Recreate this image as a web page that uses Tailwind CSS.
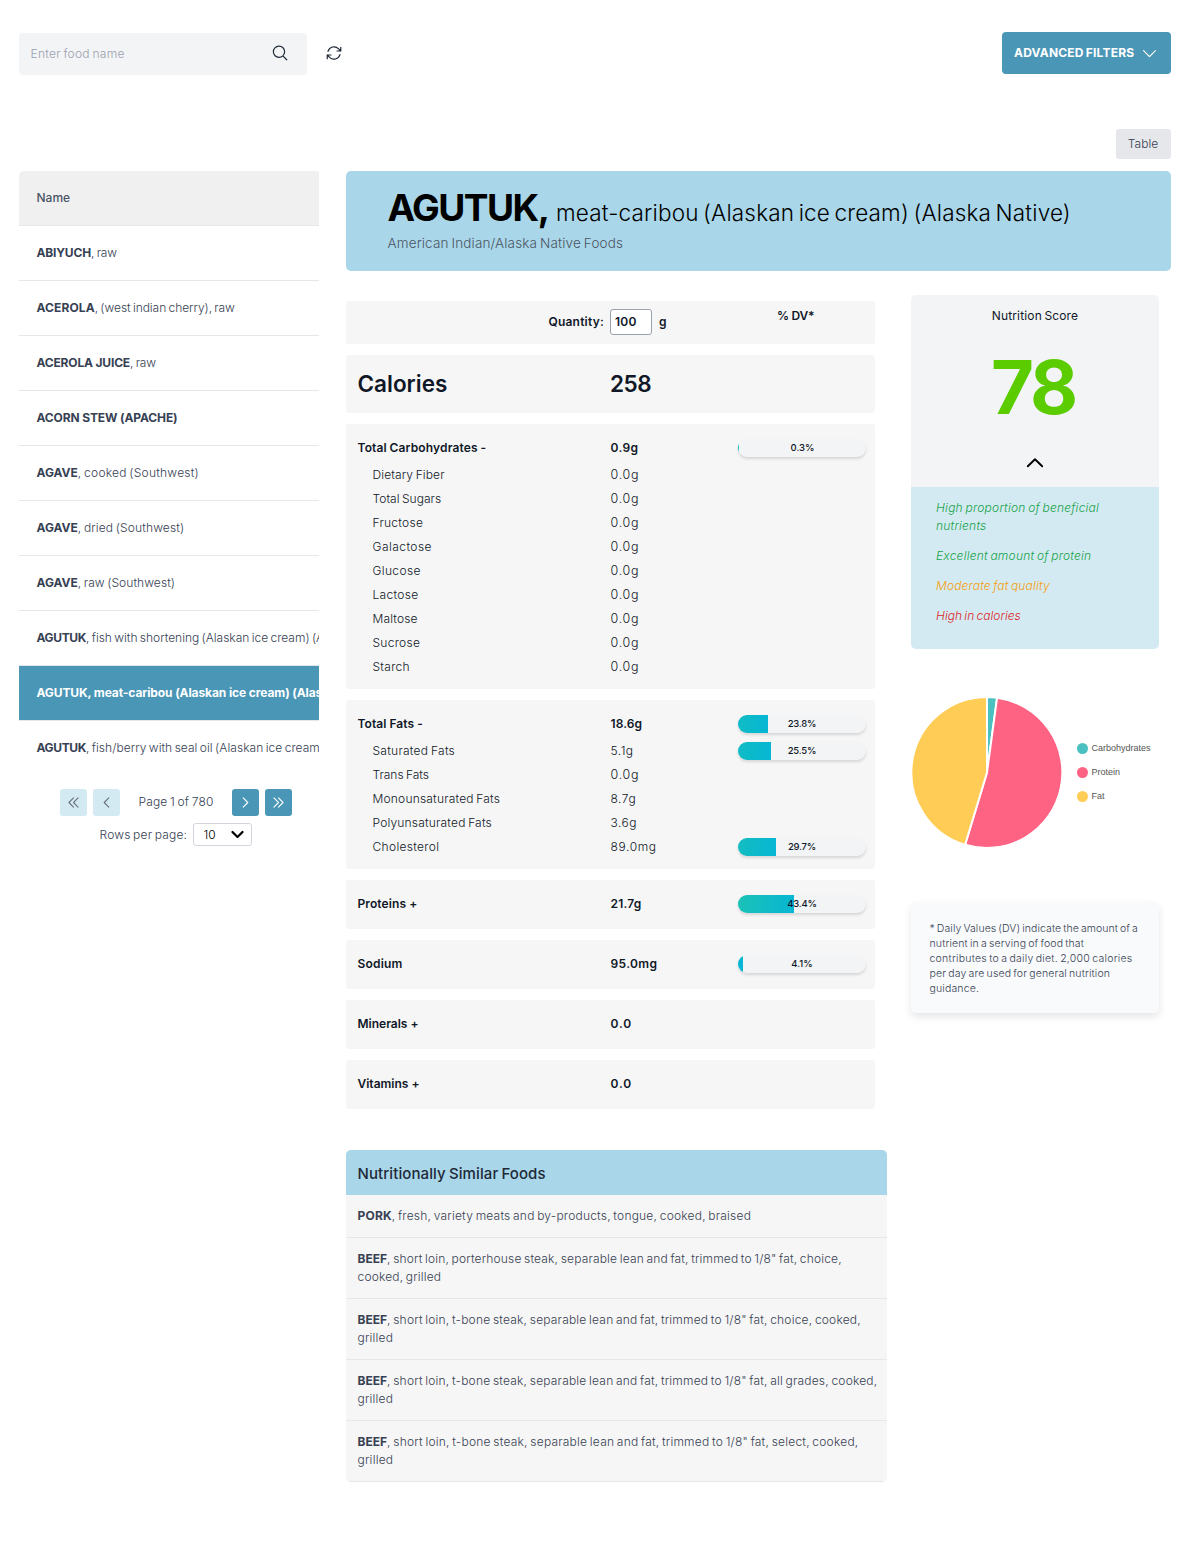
<!DOCTYPE html>
<html lang="en">
<head>
<meta charset="utf-8">
<title>Food nutrition</title>
<script src="https://cdn.jsdelivr.net/npm/@tailwindcss/browser@4"></script>
</head>
<body class="h-[1546px] overflow-hidden bg-white pl-[19px] pr-5 pt-8 font-['Inter',sans-serif] font-[360] text-[12px] leading-[18px] text-gray-700">

<!-- Toolbar -->
<header class="flex h-[43px] items-start">
  <div class="mt-px flex h-[42px] w-72 items-center justify-between rounded-[4px] bg-gray-100 pl-[11.5px] pr-[18px]">
    <span class="text-gray-400 tracking-[0.27px] [word-spacing:-1px]">Enter food name</span>
    <svg class="mb-0.5 size-[18px]" viewBox="0 0 24 24" fill="none" stroke="#1f2937" stroke-width="1.6" stroke-linecap="round" stroke-linejoin="round"><path d="M21 21l-5.2-5.2m0 0A7.5 7.5 0 1 0 5.2 5.2a7.5 7.5 0 0 0 10.6 10.6z"/></svg>
  </div>
  <svg class="ml-[18px] mt-3 size-[18px]" viewBox="0 0 24 24" fill="none" stroke="#1f2937" stroke-width="1.6" stroke-linecap="round" stroke-linejoin="round"><path d="M16.023 9.348h4.992v-.001M2.985 19.644v-4.992m0 0h4.992m-4.993 0 3.181 3.183a8.25 8.25 0 0 0 13.803-3.7M4.031 9.865a8.25 8.25 0 0 1 13.803-3.7l3.181 3.182m0-4.991v4.99"/></svg>
  <button class="ml-auto flex h-[42px] w-[169px] items-center gap-2 rounded-[4px] bg-[#4a96b7] pl-3 font-bold tracking-[0.2px] text-white [word-spacing:-1px]">ADVANCED FILTERS
    <svg class="size-[15px]" viewBox="0 0 24 24" fill="none" stroke="currentColor" stroke-width="1.9" stroke-linecap="round" stroke-linejoin="round"><path d="M2.5 7.5l9.5 9.5 9.5-9.5"/></svg>
  </button>
</header>

<div class="mt-[54px] flex justify-end">
  <button class="h-[30px] w-[55px] rounded-[3px] bg-gray-200 pr-px">Table</button>
</div>

<main class="mt-3 flex items-start gap-[27px]">
  <!-- Food list -->
  <aside class="w-[300px] shrink-0">
    <div class="overflow-hidden whitespace-nowrap rounded-tl-[5px] text-gray-700">
      <div class="flex h-[55px] items-center border-b border-gray-200 bg-[#f0f0f0] pl-[17.5px] pb-px font-medium text-gray-600">Name</div>
      <div class="flex h-[55px] items-center border-b border-gray-200 pl-[17.5px]"><b class="tracking-[-0.17px]">ABIYUCH</b><span class="tracking-[-0.25px] [word-spacing:-0.5px]">, raw</span></div>
      <div class="flex h-[55px] items-center border-b border-gray-200 pl-[17.5px]"><b class="tracking-[0.1px]">ACEROLA</b><span class="tracking-[-0.05px] [word-spacing:-1px]">, (west indian cherry), raw</span></div>
      <div class="flex h-[55px] items-center border-b border-gray-200 pl-[17.5px]"><b class="tracking-[-0.17px]">ACEROLA JUICE</b><span class="tracking-[-0.25px] [word-spacing:-0.5px]">, raw</span></div>
      <div class="flex h-[55px] items-center border-b border-gray-200 pl-[17.5px]"><b class="tracking-[-0.12px]">ACORN STEW (APACHE)</b></div>
      <div class="flex h-[55px] items-center border-b border-gray-200 pl-[17.5px]"><b>AGAVE</b><span class="tracking-[0.24px] [word-spacing:-1px]">, cooked (Southwest)</span></div>
      <div class="flex h-[55px] items-center border-b border-gray-200 pl-[17.5px]"><b>AGAVE</b><span class="tracking-[0.14px] [word-spacing:-1px]">, dried (Southwest)</span></div>
      <div class="flex h-[55px] items-center border-b border-gray-200 pl-[17.5px]"><b>AGAVE</b><span class="tracking-[0.08px] [word-spacing:-1px]">, raw (Southwest)</span></div>
      <div class="flex h-[55px] items-center border-b border-gray-200 pl-[17.5px]"><b class="tracking-[-0.36px]">AGUTUK</b><span class="tracking-[-0.01px] [word-spacing:-1px]">, fish with shortening (Alaskan ice cream) (Alaska Native)</span></div>
      <div class="flex h-[55px] items-center border-b border-gray-200 bg-[#4a96b7] pl-[17.5px] text-white"><b class="tracking-[-0.1px]">AGUTUK, meat-caribou (Alaskan ice cream) (Alaska Native)</b></div>
      <div class="flex h-[55px] items-center pb-px pl-[17.5px]"><b class="tracking-[-0.36px]">AGUTUK</b><span class="tracking-[0.04px] [word-spacing:-1px]">, fish/berry with seal oil (Alaskan ice cream) (Alaska Native)</span></div>
    </div>
    <div class="mt-[13px] flex items-center pl-[41px]">
      <button class="flex size-[27px] items-center justify-center rounded-[3px] bg-[#d4eaf2] text-gray-500"><svg class="size-[11px]" viewBox="0 0 24 24" fill="none" stroke="currentColor" stroke-width="2.4" stroke-linecap="round" stroke-linejoin="round"><path d="M12 2L2 12l10 10M22 2L12 12l10 10"/></svg></button>
      <button class="ml-1.5 flex size-[27px] items-center justify-center rounded-[3px] bg-[#d4eaf2] text-gray-500"><svg class="size-[11px]" viewBox="0 0 24 24" fill="none" stroke="currentColor" stroke-width="2.4" stroke-linecap="round" stroke-linejoin="round"><path d="M17 2L7 12l10 10"/></svg></button>
      <span class="mb-0.5 w-28 text-center tracking-[0.18px] [word-spacing:-1px]">Page 1 of 780</span>
      <button class="flex size-[27px] items-center justify-center rounded-[3px] bg-[#4a96b7] text-white"><svg class="size-[11px]" viewBox="0 0 24 24" fill="none" stroke="currentColor" stroke-width="2.4" stroke-linecap="round" stroke-linejoin="round"><path d="M7 2l10 10L7 22"/></svg></button>
      <button class="ml-1.5 flex size-[27px] items-center justify-center rounded-[3px] bg-[#4a96b7] text-white"><svg class="size-[11px]" viewBox="0 0 24 24" fill="none" stroke="currentColor" stroke-width="2.4" stroke-linecap="round" stroke-linejoin="round"><path d="M2 2l10 10L2 22M12 2l10 10-10 10"/></svg></button>
    </div>
    <div class="mt-[7px] flex items-center pl-[80.5px]">
      <span class="w-[87.5px] whitespace-nowrap tracking-[0.18px] [word-spacing:-1px]">Rows per page:</span>
      <div class="ml-1.5 flex h-[23px] w-[59px] items-center justify-between rounded-[3px] border border-gray-300 pl-[9.5px] pr-[7px] text-black">10
        <svg class="h-[9px] w-[13px]" viewBox="0 0 13 9" fill="none" stroke="#000" stroke-width="2.2" stroke-linecap="round" stroke-linejoin="round"><path d="M1.5 2l5 5 5-5"/></svg>
      </div>
    </div>
  </aside>

  <section class="w-[825px] shrink-0">
    <!-- Title banner -->
    <div class="h-[100px] rounded-[5px] bg-[#a9d6e8] pl-[41.5px] pt-[13px]">
      <h1 class="flex h-12 items-baseline whitespace-nowrap text-black"><span class="text-[37px] leading-[48px] font-bold tracking-[-1.53px]">AGUTUK,</span><span class="ml-[7.5px] text-[22.5px] font-[345] tracking-[0.17px] [word-spacing:-2px]">meat-caribou (Alaskan ice cream) (Alaska Native)</span></h1>
      <p class="mt-0.5 text-[13.5px] tracking-[0.15px] text-gray-600 [word-spacing:-1px]">American Indian/Alaska Native Foods</p>
    </div>

    <div class="flex items-start">
      <div class="mt-[30px] w-[529px] text-gray-900">
        <div class="flex h-[43px] rounded-[3px] bg-[#f6f6f6] font-semibold">
          <div class="flex w-[392px] items-center pb-0.5 pl-[202.5px]"><span class="tracking-[0.2px]">Quantity:</span>
            <span class="ml-1.5 flex h-[26px] w-[42px] items-center rounded-[3px] border border-gray-400 bg-white pl-1 tracking-[0.35px]">100</span>
            <span class="ml-[7px]">g</span></div>
          <span class="ml-[39px] mt-1.5 tracking-[-0.1px] [word-spacing:-0.5px]">% DV*</span>
        </div>

        <div class="mt-[11px] flex h-[58px] items-center rounded-[3px] bg-[#f6f6f6] pl-[11.5px] text-[22.5px] font-semibold">
          <span class="w-[252.5px]">Calories</span><span class="tracking-[-0.5px]">258</span>
        </div>

        <div class="mt-[11px] rounded-[3px] bg-[#f6f6f6] pb-2.5 pl-[11.5px] pr-[9px] pt-[9px]">
          <div class="flex h-[30px] items-center font-semibold"><span class="w-[253px] tracking-[0.15px] [word-spacing:-0.5px]">Total Carbohydrates -</span><span class="w-[127.5px] tracking-[0.38px]">0.9g</span>
            <div class="relative h-[18px] w-32 overflow-hidden rounded-full bg-gray-100 shadow-[0_2px_3px_rgba(0,0,0,0.13)]"><div class="h-full bg-[linear-gradient(100deg,#2bc4a8,#06b6d4)]" style="width:0.6%"></div><span class="absolute inset-0 pl-px text-center text-[9.5px] font-medium">0.3%</span></div></div>
          <div class="flex h-6 items-center"><span class="w-[253px] pl-[15px] tracking-[0.12px] [word-spacing:-1px]">Dietary Fiber</span><span class="text-[12.5px] tracking-[0.75px]">0.0g</span></div>
          <div class="flex h-6 items-center"><span class="w-[253px] pl-[15px] tracking-[0.04px] [word-spacing:-1px]">Total Sugars</span><span class="text-[12.5px] tracking-[0.75px]">0.0g</span></div>
          <div class="flex h-6 items-center"><span class="w-[253px] pl-[15px] tracking-[0.27px]">Fructose</span><span class="text-[12.5px] tracking-[0.75px]">0.0g</span></div>
          <div class="flex h-6 items-center"><span class="w-[253px] pl-[15px] tracking-[0.46px]">Galactose</span><span class="text-[12.5px] tracking-[0.75px]">0.0g</span></div>
          <div class="flex h-6 items-center"><span class="w-[253px] pl-[15px] tracking-[0.36px]">Glucose</span><span class="text-[12.5px] tracking-[0.75px]">0.0g</span></div>
          <div class="flex h-6 items-center"><span class="w-[253px] pl-[15px] tracking-[0.32px]">Lactose</span><span class="text-[12.5px] tracking-[0.75px]">0.0g</span></div>
          <div class="flex h-6 items-center"><span class="w-[253px] pl-[15px] tracking-[0.15px]">Maltose</span><span class="text-[12.5px] tracking-[0.75px]">0.0g</span></div>
          <div class="flex h-6 items-center"><span class="w-[253px] pl-[15px] tracking-[0.27px]">Sucrose</span><span class="text-[12.5px] tracking-[0.75px]">0.0g</span></div>
          <div class="flex h-6 items-center"><span class="w-[253px] pl-[15px] tracking-[0.27px]">Starch</span><span class="text-[12.5px] tracking-[0.75px]">0.0g</span></div>
        </div>

        <div class="mt-[11px] rounded-[3px] bg-[#f6f6f6] pb-2.5 pl-[11.5px] pr-[9px] pt-[9px]">
          <div class="flex h-[30px] items-center font-semibold"><span class="w-[253px] tracking-[0.05px]">Total Fats -</span><span class="w-[127.5px] tracking-[0.1px]">18.6g</span>
            <div class="relative h-[18px] w-32 overflow-hidden rounded-full bg-gray-100 shadow-[0_2px_3px_rgba(0,0,0,0.13)]"><div class="h-full bg-[linear-gradient(100deg,#10bcc4,#06b6d4)]" style="width:23.8%"></div><span class="absolute inset-0 text-center text-[9.5px] font-medium tracking-[-0.2px]">23.8%</span></div></div>
          <div class="flex h-6 items-center"><span class="w-[253px] pl-[15px] tracking-[0.27px] [word-spacing:-1px]">Saturated Fats</span><span class="w-[127.5px] tracking-[0.5px]">5.1g</span>
            <div class="relative h-[18px] w-32 overflow-hidden rounded-full bg-gray-100 shadow-[0_2px_3px_rgba(0,0,0,0.13)]"><div class="h-full bg-[linear-gradient(100deg,#10bcc4,#06b6d4)]" style="width:25.5%"></div><span class="absolute inset-0 text-center text-[9.5px] font-medium tracking-[-0.2px]">25.5%</span></div></div>
          <div class="flex h-6 items-center"><span class="w-[253px] pl-[15px] [word-spacing:-1px]">Trans Fats</span><span class="text-[12.5px] tracking-[0.75px]">0.0g</span></div>
          <div class="flex h-6 items-center"><span class="w-[253px] pl-[15px] tracking-[0.2px] [word-spacing:-1px]">Monounsaturated Fats</span><span class="tracking-[0.5px]">8.7g</span></div>
          <div class="flex h-6 items-center"><span class="w-[253px] pl-[15px] tracking-[0.19px] [word-spacing:-1px]">Polyunsaturated Fats</span><span class="tracking-[0.5px]">3.6g</span></div>
          <div class="flex h-6 items-center"><span class="w-[253px] pl-[15px] tracking-[0.32px]">Cholesterol</span><span class="w-[127.5px] tracking-[0.6px]">89.0mg</span>
            <div class="relative h-[18px] w-32 overflow-hidden rounded-full bg-gray-100 shadow-[0_2px_3px_rgba(0,0,0,0.13)]"><div class="h-full bg-[linear-gradient(100deg,#14bdc0,#06b6d4)]" style="width:29.7%"></div><span class="absolute inset-0 text-center text-[9.5px] font-medium tracking-[-0.2px]">29.7%</span></div></div>
        </div>

        <div class="mt-[11px] flex h-[49px] items-center rounded-[3px] bg-[#f6f6f6] pb-px pl-[11.5px] pr-[9px] font-semibold"><span class="w-[253px] tracking-[0.1px]">Proteins +</span><span class="w-[127.5px] tracking-[0.2px]">21.7g</span>
          <div class="relative h-[18px] w-32 overflow-hidden rounded-full bg-gray-100 shadow-[0_2px_3px_rgba(0,0,0,0.13)]"><div class="h-full bg-[linear-gradient(100deg,#1cc2b6,#06b6d4)]" style="width:43.4%"></div><span class="absolute inset-0 text-center text-[9.5px] font-medium tracking-[-0.2px]">43.4%</span></div></div>

        <div class="mt-[11px] flex h-[49px] items-center rounded-[3px] bg-[#f6f6f6] pb-px pl-[11.5px] pr-[9px] font-semibold"><span class="w-[253px] tracking-[0.2px]">Sodium</span><span class="w-[127.5px] tracking-[0.35px]">95.0mg</span>
          <div class="relative h-[18px] w-32 overflow-hidden rounded-full bg-gray-100 shadow-[0_2px_3px_rgba(0,0,0,0.13)]"><div class="h-full bg-[#06b6d4]" style="width:4.1%"></div><span class="absolute inset-0 text-center text-[9.5px] font-medium">4.1%</span></div></div>

        <div class="mt-[11px] flex h-[49px] items-center rounded-[3px] bg-[#f6f6f6] pb-px pl-[11.5px] font-semibold"><span class="w-[253px]">Minerals +</span><span class="tracking-[0.9px]">0.0</span></div>
        <div class="mt-[11px] flex h-[49px] items-center rounded-[3px] bg-[#f6f6f6] pb-px pl-[11.5px] font-semibold"><span class="w-[253px]">Vitamins +</span><span class="tracking-[0.9px]">0.0</span></div>
      </div>

      <div class="ml-9 mt-6 w-[248px]">
        <!-- Nutrition score -->
        <div class="overflow-hidden rounded-[5px]">
          <div class="flex h-48 flex-col items-center bg-gray-100 pt-3 text-gray-900">
            <span class="font-normal tracking-[0.15px] [word-spacing:-1px]">Nutrition Score</span>
            <span class="mr-1 mt-6 text-[74px] leading-[76px] font-bold tracking-[-3px] text-[#5bcc00]">78</span>
            <svg class="mt-8 h-[11px] w-[18px]" viewBox="0 0 18 11" fill="none" stroke="#000" stroke-width="1.9" stroke-linejoin="round" stroke-linecap="round"><path d="M1.8 9.3L9 2.2l7.2 7.1"/></svg>
          </div>
          <div class="flex h-[162px] flex-col gap-3 bg-[#d4eaf2] px-[25px] pt-3 tracking-[0.22px] italic [word-spacing:-1px]">
            <p class="text-[#16a34a]">High proportion of beneficial nutrients</p>
            <p class="text-[#16a34a]">Excellent amount of protein</p>
            <p class="tracking-[0.15px] text-[#f59e0b]">Moderate fat quality</p>
            <p class="tracking-[0px] text-[#dc2626]">High in calories</p>
          </div>
        </div>

        <!-- Macronutrient pie -->
        <div class="mt-[47px] flex items-center">
          <svg class="size-[153px]" viewBox="-76 -76.5 153 153" stroke="#fff" stroke-width="2" stroke-linejoin="round">
            <path fill="#4bc0c0" d="M0 0V-75.5A75.5 75.5 0 0 1 10.1 -74.8Z"/>
            <path fill="#ff6384" d="M0 0L10.1 -74.8A75.5 75.5 0 1 1 -21.9 72.3Z"/>
            <path fill="#ffcd56" d="M0 0L-21.9 72.3A75.5 75.5 0 0 1 0 -75.5Z"/>
          </svg>
          <ul class="mb-0.5 ml-[13px] font-['Liberation_Sans',sans-serif] text-[9px] leading-6 font-normal text-[#555]">
            <li class="flex items-center gap-[3.5px]"><i class="mt-px size-[11px] rounded-full bg-[#4bc0c0]"></i>Carbohydrates</li>
            <li class="flex items-center gap-[3.5px]"><i class="mt-px size-[11px] rounded-full bg-[#ff6384]"></i>Protein</li>
            <li class="flex items-center gap-[3.5px]"><i class="mt-px size-[11px] rounded-full bg-[#ffcd56]"></i>Fat</li>
          </ul>
        </div>

        <p class="mt-[53px] h-[111px] whitespace-nowrap rounded-[5px] bg-gray-50 px-[18.5px] pt-[19px] text-[10.5px] leading-[15px] shadow-[0_4px_8px_rgba(0,0,0,0.1)] [word-spacing:-1px]"><span class="tracking-[0.08px]">* Daily Values (DV) indicate the amount of a</span><br><span class="tracking-[0.14px]">nutrient in a serving of food that</span><br><span class="tracking-[0.25px]">contributes to a daily diet. 2,000 calories</span><br><span class="tracking-[0.15px]">per day are used for general nutrition</span><br><span class="tracking-[0.15px]">guidance.</span></p>
      </div>
    </div>

    <!-- Similar foods -->
    <div class="mt-[41px] w-[541px] overflow-hidden rounded-[5px] bg-[#f6f6f6]">
      <h2 class="flex h-[45px] items-center bg-[#a9d6e8] pl-[11.5px] pt-0.5 text-[15px] font-medium tracking-[0.1px] text-gray-800 [word-spacing:-1px]">Nutritionally Similar Foods</h2>
      <div class="h-[43px] border-b border-gray-200 pl-[11.5px] pt-3"><b class="tracking-[0.2px]">PORK</b><span class="tracking-[0.21px] [word-spacing:-1px]">, fresh, variety meats and by-products, tongue, cooked, braised</span></div>
      <div class="h-[61px] border-b border-gray-200 pl-[11.5px] pt-3"><b>BEEF</b><span class="tracking-[0.17px] [word-spacing:-1px]">, short loin, porterhouse steak, separable lean and fat, trimmed to 1/8" fat, choice,<br>cooked, grilled</span></div>
      <div class="h-[61px] border-b border-gray-200 pl-[11.5px] pt-3"><b>BEEF</b><span class="tracking-[0.2px] [word-spacing:-1px]">, short loin, t-bone steak, separable lean and fat, trimmed to 1/8" fat, choice, cooked,<br>grilled</span></div>
      <div class="h-[61px] border-b border-gray-200 pl-[11.5px] pt-3"><b>BEEF</b><span class="tracking-[0.2px] [word-spacing:-1px]">, short loin, t-bone steak, separable lean and fat, trimmed to 1/8" fat, all grades, cooked,<br>grilled</span></div>
      <div class="h-[61px] border-b border-gray-200 pl-[11.5px] pt-3"><b>BEEF</b><span class="tracking-[0.22px] [word-spacing:-1px]">, short loin, t-bone steak, separable lean and fat, trimmed to 1/8" fat, select, cooked,<br>grilled</span></div>
    </div>
  </section>
</main>
</body>
</html>
